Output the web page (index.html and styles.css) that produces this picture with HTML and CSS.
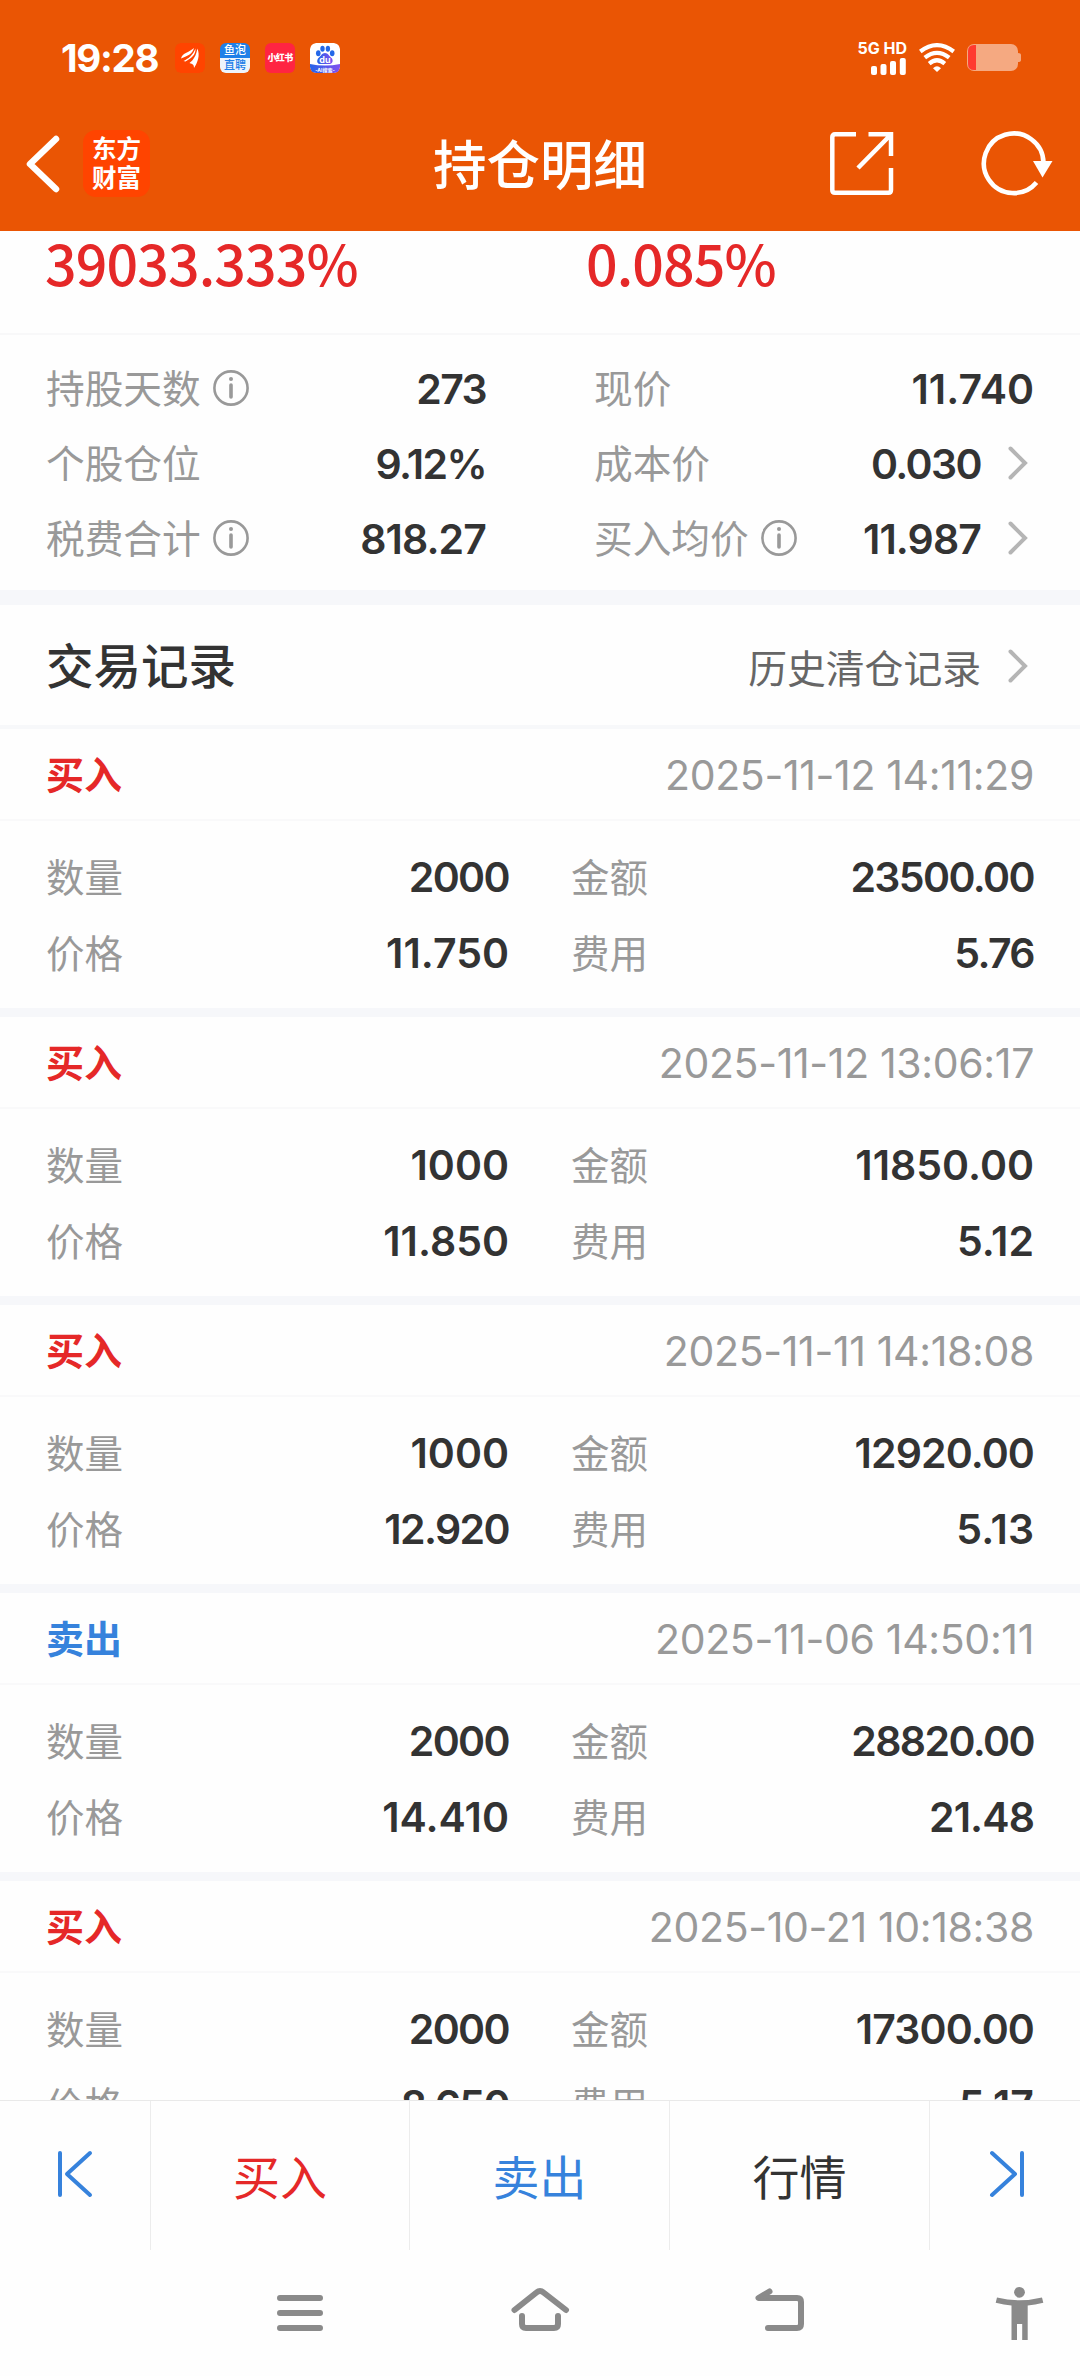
FILE: index.html
```html
<!DOCTYPE html>
<html lang="zh-CN">
<head>
<meta charset="utf-8">
<title>持仓明细</title>
<link rel="stylesheet" href="styles.css">
</head>
<body>
<div class="screen">
  <header class="header">
    <div class="status">
      <span class="clock">19:28</span>
      <div class="notices">
        <svg class="notice" viewBox="0 0 30 30"><rect width="30" height="30" rx="6" fill="#ff4400"/><path d="M6 15.500C7 10 15 9 19 5C17.500 11 13 12.500 6 15.500Z M8.500 18C13 16 18 12 20.500 5.500C21 12 16 15.500 10.500 18.500Z M14.500 20C18.500 17 21.500 12 22.300 5.500C25.500 12 22.500 20 19 25C19 22 18 21 14.500 20Z" fill="#fff"/></svg>
        <div class="notice yupao"><span>鱼泡</span><span>直聘</span></div>
        <div class="notice xhs"><span>小红书</span></div>
        <svg class="notice" viewBox="0 0 30 30"><defs><linearGradient id="paw" x1="0" x2="1"><stop offset="0" stop-color="#2563e8"/><stop offset="1" stop-color="#8350ef"/></linearGradient></defs><rect width="30" height="30" rx="6" fill="#fff"/><path d="M0 21Q15 24 30 21V24Q30 30 24 30H6Q0 30 0 24Z" fill="url(#paw)"/><g fill="#2367e8"><ellipse cx="8.300" cy="10.300" rx="2.300" ry="3"/><ellipse cx="12.500" cy="5.700" rx="2.200" ry="3"/><ellipse cx="17.900" cy="5.700" rx="2.200" ry="3"/><ellipse cx="22.200" cy="10.300" rx="2.300" ry="3"/></g><path d="M15 10C18 10 19 13 22 15.500C24 19 21 21.500 18.500 21H11.500C8 21.500 6 19 8 15.500C11 13 12 10 15 10Z" fill="url(#paw)"/><text x="15" y="19.500" text-anchor="middle" class="paw-text">du</text><text x="15" y="28.500" text-anchor="middle" class="paw-sub">-AI搜索-</text></svg>
      </div>
      <div class="network"><span>5G HD</span><svg width="36" height="17" viewBox="0 0 36 17" fill="#fff"><rect x="0" y="8" width="6" height="9" rx="2"/><rect x="9.500" y="6" width="6" height="11" rx="2"/><rect x="19" y="3" width="6" height="14" rx="2"/><rect x="28.800" y="0" width="6" height="17" rx="2"/></svg></div>
      <svg class="wifi" width="36" height="30" viewBox="0 0 36 30" fill="none" stroke="#fff" stroke-width="4.200"><path d="M1.300 8.500Q18 -4.200 34.700 8.500"/><path d="M5.800 14.600Q18 5 30.200 14.600"/><path d="M10.200 20.600Q18 14 25.800 20.600"/><path d="M14 25.200Q18 21.500 22 25.200L18 29Z" fill="#fff" stroke="none"/></svg>
      <svg class="battery" width="54" height="28" viewBox="0 0 54 28"><rect width="51" height="27" rx="7" fill="#f5a981"/><path d="M51 9Q54 9 54 11V16Q54 18 51 18Z" fill="#f5a981"/><path d="M9 1H7Q1 1 1 7V20Q1 26 7 26H9Z" fill="#ff3b30"/></svg>
    </div>
    <div class="titlebar">
      <svg class="back" width="34" height="60" viewBox="0 0 34 60" fill="none" stroke="#fff" stroke-width="6.500" stroke-linecap="round" stroke-linejoin="round"><path d="M30 5L4 30L30 55"/></svg>
      <div class="brand"><span>东方</span><span>财富</span></div>
      <h1 class="title">持仓明细</h1>
      <svg class="share" width="64" height="64" viewBox="0 0 64 64" fill="none" stroke="#fff" stroke-width="4.500"><path d="M26 2.300H5Q2.300 2.300 2.300 5V58Q2.300 60.700 5 60.700H58.500Q61 60.700 61 58V36M38.500 2.300H61V24M60 3.500L28 36"/></svg>
      <svg class="refresh" width="72" height="66" viewBox="0 0 72 66" fill="none" stroke="#fff" stroke-width="4.600"><path d="M55.500 51.500A29.800 29.800 0 1 1 62.500 32"/><path d="M52 30H71.500L61.500 46.500Z" fill="#fff" stroke="none"/></svg>
    </div>
  </header>

  <main class="content">
    <section class="totals"><span>39033.333%</span><span>0.085%</span></section>
    <section class="stats">
      <div class="stat"><span class="label">持股天数</span><svg class="info" viewBox="0 0 36 36"><circle cx="18" cy="18" r="16.600"/><path d="M18 15V27"/><circle class="dot" cx="18" cy="9" r="2"/></svg><b class="tighter">273</b></div>
      <div class="stat"><span class="label">现价</span><b>11.740</b></div>
      <div class="stat"><span class="label">个股仓位</span><b class="tighter">9.12%</b></div>
      <div class="stat"><span class="label">成本价</span><b class="tighter">0.030</b><svg class="chev" viewBox="0 0 20 34"><path d="M2.500 2.500L17 17L2.500 31.500"/></svg></div>
      <div class="stat"><span class="label">税费合计</span><svg class="info" viewBox="0 0 36 36"><circle cx="18" cy="18" r="16.600"/><path d="M18 15V27"/><circle class="dot" cx="18" cy="9" r="2"/></svg><b class="tight">818.27</b></div>
      <div class="stat"><span class="label">买入均价</span><svg class="info" viewBox="0 0 36 36"><circle cx="18" cy="18" r="16.600"/><path d="M18 15V27"/><circle class="dot" cx="18" cy="9" r="2"/></svg><b class="tight">11.987</b><svg class="chev" viewBox="0 0 20 34"><path d="M2.500 2.500L17 17L2.500 31.500"/></svg></div>
    </section>
    <section class="records-head"><h2>交易记录</h2><span>历史清仓记录</span><svg class="chev" viewBox="0 0 20 34"><path d="M2.500 2.500L17 17L2.500 31.500"/></svg></section>

    <article class="record">
      <div class="record-top"><strong class="buy">买入</strong><time>2025-11-12 14:11:29</time></div>
      <div class="record-body"><span>数量</span><b class="tighter">2000</b><span>金额</span><b class="tighter">23500.00</b><span>价格</span><b>11.750</b><span>费用</span><b class="tighter">5.76</b></div>
    </article>
    <article class="record">
      <div class="record-top"><strong class="buy">买入</strong><time>2025-11-12 13:06:17</time></div>
      <div class="record-body"><span>数量</span><b>1000</b><span>金额</span><b>11850.00</b><span>价格</span><b>11.850</b><span>费用</span><b>5.12</b></div>
    </article>
    <article class="record">
      <div class="record-top"><strong class="buy">买入</strong><time>2025-11-11 14:18:08</time></div>
      <div class="record-body"><span>数量</span><b>1000</b><span>金额</span><b class="tight">12920.00</b><span>价格</span><b class="tighter">12.920</b><span>费用</span><b>5.13</b></div>
    </article>
    <article class="record">
      <div class="record-top"><strong class="sell">卖出</strong><time>2025-11-06 14:50:11</time></div>
      <div class="record-body"><span>数量</span><b class="tighter">2000</b><span>金额</span><b class="tighter">28820.00</b><span>价格</span><b>14.410</b><span>费用</span><b class="tight">21.48</b></div>
    </article>
    <article class="record">
      <div class="record-top"><strong class="buy">买入</strong><time>2025-10-21 10:18:38</time></div>
      <div class="record-body"><span>数量</span><b class="tighter">2000</b><span>金额</span><b class="tight">17300.00</b><span>价格</span><b class="tighter">8.650</b><span>费用</span><b>5.17</b></div>
    </article>
  </main>

  <nav class="actions">
    <div class="action"><svg width="36" height="50" viewBox="0 0 36 50"><path d="M3 4V46M33 4L10 25L33 46"/></svg></div>
    <div class="action buy">买入</div>
    <div class="action sell">卖出</div>
    <div class="action">行情</div>
    <div class="action"><svg width="36" height="50" viewBox="0 0 36 50"><path d="M33 4V46M3 4L26 25L3 46"/></svg></div>
  </nav>
  <footer class="sysnav">
    <svg width="46" height="56" viewBox="277 2285 46 56"><path d="M280 2298H320M280 2313H320M280 2328H320"/></svg>
    <svg width="60" height="56" viewBox="510 2285 60 56"><path d="M514.500 2310L536.500 2292.500Q540 2289.500 543.500 2292.500L566 2310M522 2316V2324Q522 2328 526 2328H554Q558 2328 558 2324V2316"/></svg>
    <svg width="50" height="56" viewBox="755 2285 50 56"><path d="M769.500 2291.500L758.500 2298H797Q801 2298 801 2302V2324Q801 2328 797 2328H768"/><path class="solid" d="M758.500 2298L769.500 2291.500L768 2299Z"/></svg>
    <svg width="50" height="56" viewBox="995 2285 50 56"><g class="solid"><circle cx="1019.500" cy="2292.300" r="5.400"/><path d="M997 2297.500Q1019.500 2303 1042 2297.500L1043.300 2302.700Q1035 2305 1027.700 2305.500V2340H1022.200V2324H1017V2340H1011.500V2305.500Q1004 2305 995.700 2302.700Z"/></g></svg>
  </footer>
</div>
</body>
</html>
```
FILE: styles.css
```css
* { box-sizing: border-box; }
body {
  margin: 0;
  background: #fefefe;
  color: #333;
  font-family: Inter, "Noto Sans CJK SC", sans-serif;
}
.screen {
  width: 1080px;
  height: 2376px;
  display: flex;
  flex-direction: column;
  overflow: hidden;
}
svg { display: block; flex: none; }
h1, h2 { margin: 0; }
.buy { color: #e52828; }
.sell { color: #3682dc; }

/* Header */
.header { flex: none; height: 231px; background: #ea5504; color: #fff; }
.status { height: 100px; padding: 16px 59px 0 61px; display: flex; align-items: center; }
.clock { width: 114px; font-size: 38.500px; font-weight: 700; letter-spacing: -1.300px; }
.notices { display: flex; gap: 15px; }
.notice { width: 30px; height: 30px; border-radius: 6px; overflow: hidden; }
.yupao { background: linear-gradient(#1f7fe8 50%, #eef4fb 50%); display: flex; flex-direction: column; }
.yupao span { height: 15px; line-height: 15px; text-align: center; font-size: 11px; font-weight: 500; }
.yupao span + span { color: #1f7fe8; }
.xhs { background: #ff2442; font-size: 9px; font-weight: 900; line-height: 29px; display: flex; justify-content: center; white-space: nowrap; letter-spacing: -0.700px; }
.paw-text { font: 700 9px Inter, sans-serif; fill: #fff; }
.paw-sub { font: 700 5px Inter, "Noto Sans CJK SC", sans-serif; fill: #fff; }
.network { margin-left: auto; display: flex; flex-direction: column; align-items: flex-end; gap: 3px; }
.network span { font-size: 16px; line-height: 14px; font-weight: 700; white-space: nowrap; }
.wifi { margin-left: 12px; }
.battery { margin-left: 12px; }
.titlebar { height: 131px; padding: 0 27px 4px 26px; display: flex; align-items: center; }
.brand {
  width: 67px; height: 67px; margin-left: 23px; border-radius: 13px;
  background: #ff4400; display: flex; flex-direction: column; align-items: center; justify-content: center;
}
.brand span { font-size: 24.500px; line-height: 29px; font-weight: 700; }
.title { margin-left: 283px; padding-top: 5px; font-size: 53.500px; line-height: 66px; font-weight: 500; white-space: nowrap; }
.share { margin-left: auto; }
.refresh { margin-left: 87px; }

/* Position summary */
.content { flex: none; height: 1869px; overflow: hidden; }
.totals { height: 104px; border-bottom: 2px solid #f8f8f9; padding: 0 45px; display: grid; grid-template-columns: 541px 1fr; }
.totals span { font-family: "Noto Sans CJK SC", sans-serif; font-size: 55.500px; font-weight: 500; line-height: 63px; letter-spacing: -0.900px; color: #e52828; }
.stats {
  height: 270px; padding: 16px 46px 0 46px; border-bottom: 15px solid #f6f7fa;
  display: grid; grid-template-columns: 440px 440px; grid-auto-rows: 75px; column-gap: 108px;
}
.stat { display: flex; align-items: center; }
.label { font-size: 38.700px; padding-bottom: 5px; color: #999; }
.stat b { margin-left: auto; }
b { font-size: 41px; font-weight: 600; }
.tight { letter-spacing: -0.900px; }
.tighter { letter-spacing: -1.600px; }
.info { width: 36px; height: 36px; margin: 0 0 2px 12px; fill: none; stroke: #999; stroke-width: 2.600; stroke-linecap: round; }
.info path { stroke-width: 3.600; }
.info .dot { fill: #999; stroke: none; }
.chev { width: 20px; height: 34px; margin: 0 6px 2px 27px; fill: none; stroke: #b5b5b5; stroke-width: 4; stroke-linecap: round; }

/* Trade records */
.records-head { height: 124px; padding: 4px 46px 0 46px; border-bottom: 4px solid #f7f8fa; display: flex; align-items: center; }
.records-head h2 { font-size: 47.500px; font-weight: 500; padding-bottom: 8px; margin-right: auto; }
.records-head span { font-size: 38.800px; padding-bottom: 3px; color: #666; }
.record { height: 288px; border-bottom: 9px solid #f6f7fa; }
.record-top { height: 92px; padding: 0 46px 0 46px; border-bottom: 2px solid #f9f9fa; display: flex; align-items: center; justify-content: space-between; }
.record-top strong { font-size: 38px; font-weight: 700; padding-bottom: 3px; }
.record-top time { font-size: 41px; letter-spacing: -0.350px; padding-top: 1px; color: #999; }
.record-body {
  padding: 18px 46px 0 46px; display: grid; grid-auto-rows: 76px; align-items: center;
  grid-template-columns: 150px 313px 150px 1fr;
}
.record-body span { font-size: 38.500px; padding-bottom: 5px; color: #999; }
.record-body b { text-align: right; }
.record-body span:nth-of-type(even) { padding-left: 62px; }

/* Bottom bars */
.actions { flex: none; height: 150px; border-top: 1px solid #e9e9e9; display: grid; grid-template-columns: 151px 259px 260px 260px 150px; }
.action { display: flex; align-items: center; justify-content: center; font-size: 47px; border-right: 1px solid #ececec; padding-bottom: 2px; }
.action:last-child { border-right: 0; padding-left: 3px; }
.action svg { margin-top: -2px; fill: none; stroke: #3682dc; stroke-width: 4; stroke-linecap: round; stroke-linejoin: round; }
.sysnav { flex: 1; padding: 35px 35px 0 277px; display: flex; align-items: flex-start; }
.sysnav svg { fill: none; stroke: #8a8a8a; stroke-width: 6; stroke-linecap: round; stroke-linejoin: round; }
.sysnav svg:nth-child(2) { margin-left: 187px; }
.sysnav svg:nth-child(3) { margin-left: 185px; }
.sysnav svg:nth-child(4) { margin-left: 190px; }
.sysnav .solid { fill: #8a8a8a; stroke: none; }
```
